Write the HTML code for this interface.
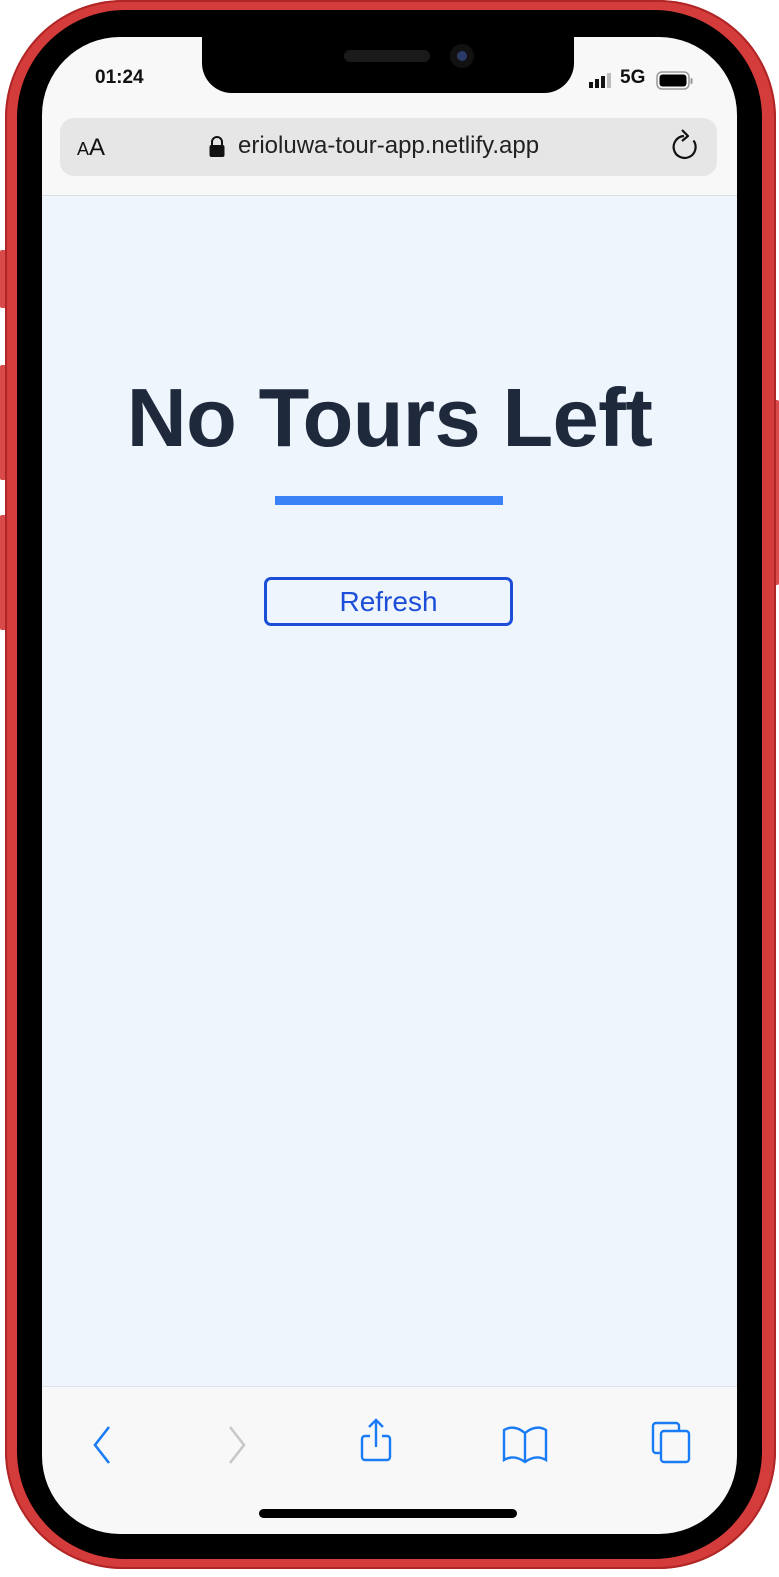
<!DOCTYPE html>
<html><head><meta charset="utf-8">
<style>
*{margin:0;padding:0;box-sizing:border-box}
html,body{width:779px;height:1577px;background:#fff;overflow:hidden;font-family:"Liberation Sans",sans-serif}
.frame{position:absolute;left:5px;top:0;width:771px;height:1569px;border-radius:118px;background:#d43b3b;box-shadow:inset 0 0 0 2px #b02525}
.bez{position:absolute;left:17px;top:10px;width:745px;height:1549px;border-radius:108px;background:#000}
.btn{position:absolute;background:#d94a4a;width:6px;border-radius:2px}
.screen{position:absolute;left:42px;top:37px;width:695px;height:1497px;border-radius:78px;background:#f8f8f8;overflow:hidden}
.notch{position:absolute;left:160px;top:-2px;width:372px;height:58px;background:#000;border-radius:0 0 30px 30px}
.content{position:absolute;left:0;top:158px;width:695px;height:1192px;background:#eef5fd;border-top:1px solid #ddd;border-bottom:1px solid #dde3ea}
.url{position:absolute;left:18px;top:81px;width:657px;height:58px;border-radius:14px;background:#e6e6e6}
h1{position:absolute;left:0;width:695px;top:181px;line-height:82px;text-align:center;font-size:83px;font-weight:bold;letter-spacing:-0.6px;color:#1e293b}
.line{position:absolute;left:233px;top:300px;width:228px;height:9px;background:#3b82f6}
.rb{position:absolute;left:222px;top:381px;width:249px;height:49px;border:3px solid #1d4ed8;border-radius:7px;text-align:center;font-size:28px;line-height:43px;color:#1d4ed8}
</style></head><body>
<div class="btn" style="left:0;top:250px;height:58px"></div>
<div class="btn" style="left:0;top:365px;height:115px"></div>
<div class="btn" style="left:0;top:515px;height:115px"></div>
<div class="btn" style="left:773px;top:400px;height:185px"></div>
<div class="frame"></div>
<div class="bez"></div>
<div class="screen">
  <div class="notch"><div style="position:absolute;left:142px;top:15px;width:86px;height:12px;border-radius:6px;background:#1a1a1a"></div><div style="position:absolute;left:248px;top:9px;width:24px;height:24px;border-radius:50%;background:#111"><div style="margin:7px;width:10px;height:10px;border-radius:50%;background:#2a3a66"></div></div></div>
  <div style="position:absolute;left:53px;top:30px;font-size:19px;font-weight:bold;color:#111">01:24</div>
  <svg style="position:absolute;left:546px;top:36px" width="24" height="16"><rect x="1" y="9" width="4" height="6" fill="#111"/><rect x="7" y="6" width="4" height="9" fill="#111"/><rect x="13" y="3" width="4" height="12" fill="#111"/><rect x="19" y="0" width="4" height="15" fill="#bbb"/></svg>
  <div style="position:absolute;left:578px;top:30px;font-size:19px;font-weight:bold;color:#111">5G</div>
  <svg style="position:absolute;left:614px;top:34px" width="38" height="20"><rect x="1" y="1" width="32" height="17" rx="5" fill="none" stroke="#999" stroke-width="1.5"/><rect x="3.5" y="3.5" width="27" height="12" rx="3" fill="#000"/><rect x="34.5" y="7" width="2" height="6" rx="1" fill="#999"/></svg>
  <div class="url">
    <div style="position:absolute;left:17px;top:16px;font-size:24px;color:#111"><span style="font-size:18px">A</span>A</div>
    <svg style="position:absolute;left:148px;top:18px" width="18" height="22"><path d="M4 9V6a5 5 0 0 1 10 0v3" fill="none" stroke="#111" stroke-width="2"/><rect x="1.5" y="9" width="15" height="12" rx="2" fill="#111"/></svg>
    <div style="position:absolute;left:178px;top:14px;font-size:24px;color:#222">erioluwa-tour-app.netlify.app</div>
    <svg style="position:absolute;left:609px;top:8px" width="34" height="40"><path d="M24.5 14.5A11 11 0 1 1 15 10" fill="none" stroke="#111" stroke-width="2.2"/><path d="M13 4l6 6-6 5" fill="none" stroke="#111" stroke-width="2.2" stroke-linejoin="round"/></svg>
  </div>
  <div class="content">
    <h1>No Tours Left</h1>
    <div class="line"></div>
    <div class="rb">Refresh</div>
  </div>
  <svg style="position:absolute;left:45px;top:1387px" width="30" height="40"><path d="M22 3L8 21l14 18" fill="none" stroke="#1a7cf5" stroke-width="2.6"/></svg>
  <svg style="position:absolute;left:180px;top:1387px" width="30" height="40"><path d="M8 3l14 18L8 39" fill="none" stroke="#c8c8c8" stroke-width="2.6"/></svg>
  <svg style="position:absolute;left:316px;top:1380px" width="36" height="46"><path d="M18 3v27M11 10l7-7 7 7" fill="none" stroke="#1a7cf5" stroke-width="2.4"/><path d="M12 19H7a3 3 0 0 0-3 3v18a3 3 0 0 0 3 3h22a3 3 0 0 0 3-3V22a3 3 0 0 0-3-3h-5" fill="none" stroke="#1a7cf5" stroke-width="2.4"/></svg>
  <svg style="position:absolute;left:460px;top:1387px" width="46" height="40"><path d="M2 36V6q10-6 21 3q11-9 21-3v30q-10-6-21 2q-11-8-21-2zM23 9v29" fill="none" stroke="#1a7cf5" stroke-width="2.4"/></svg>
  <svg style="position:absolute;left:606px;top:1383px" width="44" height="44"><rect x="5" y="3" width="26" height="30" rx="3" fill="none" stroke="#1a7cf5" stroke-width="2.4"/><rect x="13" y="11" width="28" height="31" rx="3" fill="#f8f8f8" stroke="#1a7cf5" stroke-width="2.4"/></svg>
  <div style="position:absolute;left:217px;top:1472px;width:258px;height:9px;border-radius:5px;background:#000"></div>
</div>
</body></html>
